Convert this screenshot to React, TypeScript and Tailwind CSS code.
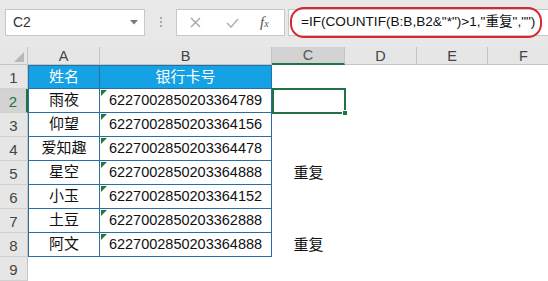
import React from "react";

const data: [string, string, string][] = [
  ["雨夜", "6227002850203364789", ""],
  ["仰望", "6227002850203364156", ""],
  ["爱知趣", "6227002850203364478", ""],
  ["星空", "6227002850203364888", "重复"],
  ["小玉", "6227002850203364152", ""],
  ["土豆", "6227002850203362888", ""],
  ["阿文", "6227002850203364888", "重复"],
];

const TopBar = () => (
  <div className="h-[47px] bg-[#e8e8e8] flex items-start pt-[9px]">
    {/* name box */}
    <div className="ml-[5px] w-[140px] h-[27px] bg-white border border-[#c8c8c8] flex items-center justify-between pl-[7px] pr-[6px]">
      <span className="text-[14px] text-[#333]">C2</span>
      <svg width="8" height="5" viewBox="0 0 8 5">
        <path d="M0 0 H8 L4 4.5 Z" fill="#7a7a7a" />
      </svg>
    </div>
    <div className="ml-[15px] mt-[8px] flex flex-col gap-[2px]">
      <span className="w-[2px] h-[2px] bg-[#a8a8a8]" />
      <span className="w-[2px] h-[2px] bg-[#a8a8a8]" />
      <span className="w-[2px] h-[2px] bg-[#a8a8a8]" />
    </div>
    {/* cancel / enter / fx */}
    <div className="ml-[14px] w-[109px] h-[27px] bg-white border border-[#c8c8c8] flex items-center pl-[13px]">
      <svg width="11" height="11" viewBox="0 0 11 11">
        <path d="M1 1 L10 10 M10 1 L1 10" stroke="#a6a6a6" strokeWidth="1.4" />
      </svg>
      <svg className="ml-[25px]" width="13" height="10" viewBox="0 0 13 10">
        <path d="M1 5 L5 9 L12 1" stroke="#b4b4b4" strokeWidth="1.6" fill="none" />
      </svg>
      <span className="ml-[21px] italic font-['Liberation_Serif',serif] text-[15px] text-[#555] leading-none">
        f<span className="text-[10px]">x</span>
      </span>
    </div>
    {/* formula input */}
    <div className="relative ml-[3px] flex-1 h-[27px] bg-white border-y border-l border-[#c8c8c8] flex items-center pl-[12px]">
      <span className="text-[13.6px] text-[#111] whitespace-nowrap">
        =IF(COUNTIF(B:B,B2&amp;"*")&gt;1,"重复","")
      </span>
      <div className="absolute left-[1px] top-[-3px] w-[252px] h-[31px] rounded-[14px] border-2 border-[#d42a2f]" />
    </div>
  </div>
);

const colHeads: { label: string; w: string; active?: boolean }[] = [
  { label: "A", w: "w-[72px]" },
  { label: "B", w: "w-[172px]" },
  { label: "C", w: "w-[73px]", active: true },
  { label: "D", w: "w-[72px]" },
  { label: "E", w: "w-[71px]" },
  { label: "F", w: "w-[72px]" },
];

const HeaderRow = () => (
  <div className="flex h-[18px] text-[14.5px] text-[#444]">
    <div className="w-[28px] shrink-0 bg-[#e6e6e6] border-r border-b border-[#c4c4c4] flex items-end justify-end pr-[3px] pb-[2px]">
      <svg width="10" height="10" viewBox="0 0 10 10">
        <path d="M10 0 V10 H0 Z" fill="#b8b8b8" />
      </svg>
    </div>
    {colHeads.map((c) =>
      c.active ? (
        <div
          key={c.label}
          className={`${c.w} shrink-0 bg-[#d3d3d3] border-r border-[#c4c4c4] border-b-2 border-b-[#217346] flex items-center justify-center leading-none pt-[1px] text-[#555]`}
        >
          {c.label}
        </div>
      ) : (
        <div
          key={c.label}
          className={`${c.w} shrink-0 bg-[#e6e6e6] border-r border-b border-[#c4c4c4] flex items-center justify-center leading-none pt-[1px]`}
        >
          {c.label}
        </div>
      )
    )}
  </div>
);

const RowHead = ({ n, active }: { n: number; active?: boolean }) =>
  active ? (
    <div className="w-[28px] shrink-0 bg-[#d3d3d3] border-b border-[#d0d0d0] border-r-2 border-r-[#217346] flex items-center justify-center pt-[4px] text-[15px] text-[#217346]">
      {n}
    </div>
  ) : (
    <div className="w-[28px] shrink-0 bg-[#e6e6e6] border-b border-[#d0d0d0] border-r border-r-[#c4c4c4] flex items-center justify-center pt-[4px] text-[15px] text-[#444]">
      {n}
    </div>
  );

const Tri = () => (
  <svg className="absolute left-[1px] top-[1px]" width="6" height="6" viewBox="0 0 6 6">
    <path d="M0 0 H6 L0 6 Z" fill="#1e7b3c" />
  </svg>
);

const Blank = () => (
  <>
    <div className="w-[72px] shrink-0" />
    <div className="w-[71px] shrink-0" />
    <div className="w-[72px] shrink-0" />
  </>
);

export default function App() {
  return (
    <div className="w-[548px] h-[281px] overflow-hidden bg-white font-['Liberation_Sans','Noto_Sans_CJK_SC',sans-serif] text-[#111]">
      <TopBar />
      <HeaderRow />

      {/* row 1: table header */}
      <div className="flex h-[24px]">
        <RowHead n={1} />
        <div className="w-[72px] shrink-0 bg-[#15a2e4] border border-[#2a6ea6] flex items-center justify-center text-white text-[15px]">
          姓名
        </div>
        <div className="w-[172px] shrink-0 bg-[#15a2e4] border-y border-r border-[#2a6ea6] flex items-center justify-center text-white text-[15px]">
          银行卡号
        </div>
        <div className="w-[73px] shrink-0" />
        <Blank />
      </div>

      {data.map(([name, card, mark], i) => (
        <div key={card + i} className="flex h-[24px] text-[14.5px]">
          <RowHead n={i + 2} active={i === 0} />
          <div className="w-[72px] shrink-0 border-x border-b border-[#2a6ea6] flex items-center justify-center text-[15px]">
            {name}
          </div>
          <div className="relative w-[172px] shrink-0 border-r border-b border-[#2a6ea6] flex items-center justify-center">
            <Tri />
            {card}
          </div>
          <div className="relative w-[73px] shrink-0 flex items-center justify-center text-[15px]">
            {mark}
            {i === 0 && (
              <div className="absolute left-0 top-[-1px] w-[74px] h-[26px] border-2 border-[#217346]">
                <span className="absolute right-[-4px] bottom-[-4px] w-[6px] h-[6px] bg-[#217346] border border-white" />
              </div>
            )}
          </div>
          <Blank />
        </div>
      ))}

      <div className="flex h-[24px]">
        <RowHead n={9} />
      </div>
    </div>
  );
}
